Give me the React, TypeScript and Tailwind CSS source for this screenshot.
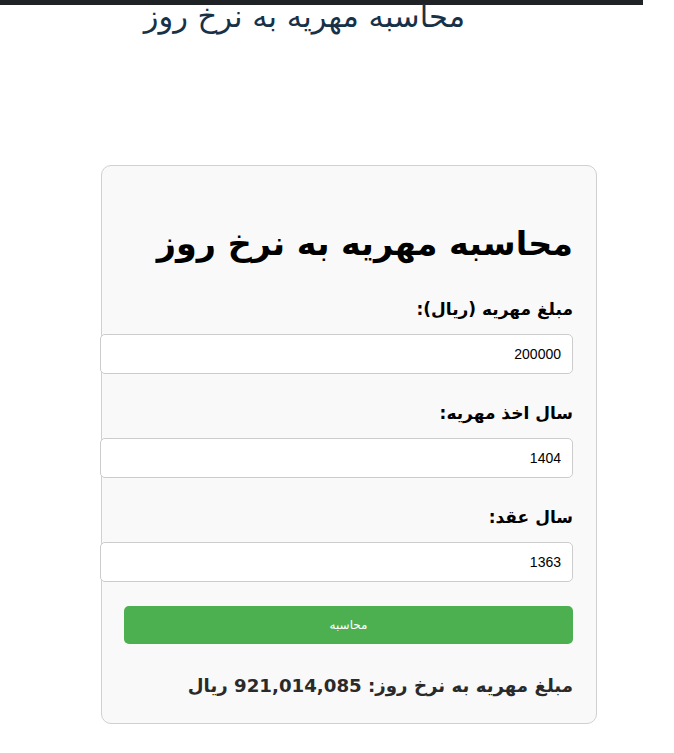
export default function App() {
  const fields = [
    { label: "مبلغ مهریه (ریال):", value: "200000" },
    { label: "سال اخذ مهریه:", value: "1404" },
    { label: "سال عقد:", value: "1363" },
  ];

  return (
    <div className="min-h-[753px] w-[674px] bg-white font-['DejaVu_Sans',sans-serif]">
      <div className="h-[5px] w-[643px] bg-[#1f2326]" />
      <div dir="rtl" className="w-[643px] pr-[178px]">
        <h1 className="-mt-[3px] text-[30.5px] leading-[30px] text-[#173248]">محاسبه مهریه به نرخ روز</h1>
      </div>

      <div
        dir="rtl"
        className="mt-[133px] ml-[101px] w-[496px] rounded-[10px] border border-[#d0d0d0] bg-[#f9f9f9] pb-[25px] pr-[23px]"
      >
        <h2 className="pt-[58px] text-[33.4px] leading-[40px] font-bold text-black">محاسبه مهریه به نرخ روز</h2>

        <div className="mt-[30px] flex flex-col">
          {fields.map((f, i) => (
            <div key={i} className={i === 0 ? "" : "mt-[24px]"}>
              <label className="block text-[17px] leading-[30px] font-bold text-black">{f.label}</label>
              <input
                readOnly
                value={f.value}
                className="mt-[10px] block h-[40px] w-[473px] rounded-[5px] border border-[#cccccc] bg-white px-[11px] text-right font-['Liberation_Sans',sans-serif] text-[14px] text-black outline-none"
              />
            </div>
          ))}
        </div>

        <button className="mt-[24px] block h-[38px] w-[449px] rounded-[5px] bg-[#4caf50] text-[12px] text-white">
          محاسبه
        </button>

        <p className="mt-[30px] text-[18.2px] leading-[24px] font-bold text-[#2a2a2a]">
          مبلغ مهریه به نرخ روز: 921,014,085 ریال
        </p>
      </div>
    </div>
  );
}
